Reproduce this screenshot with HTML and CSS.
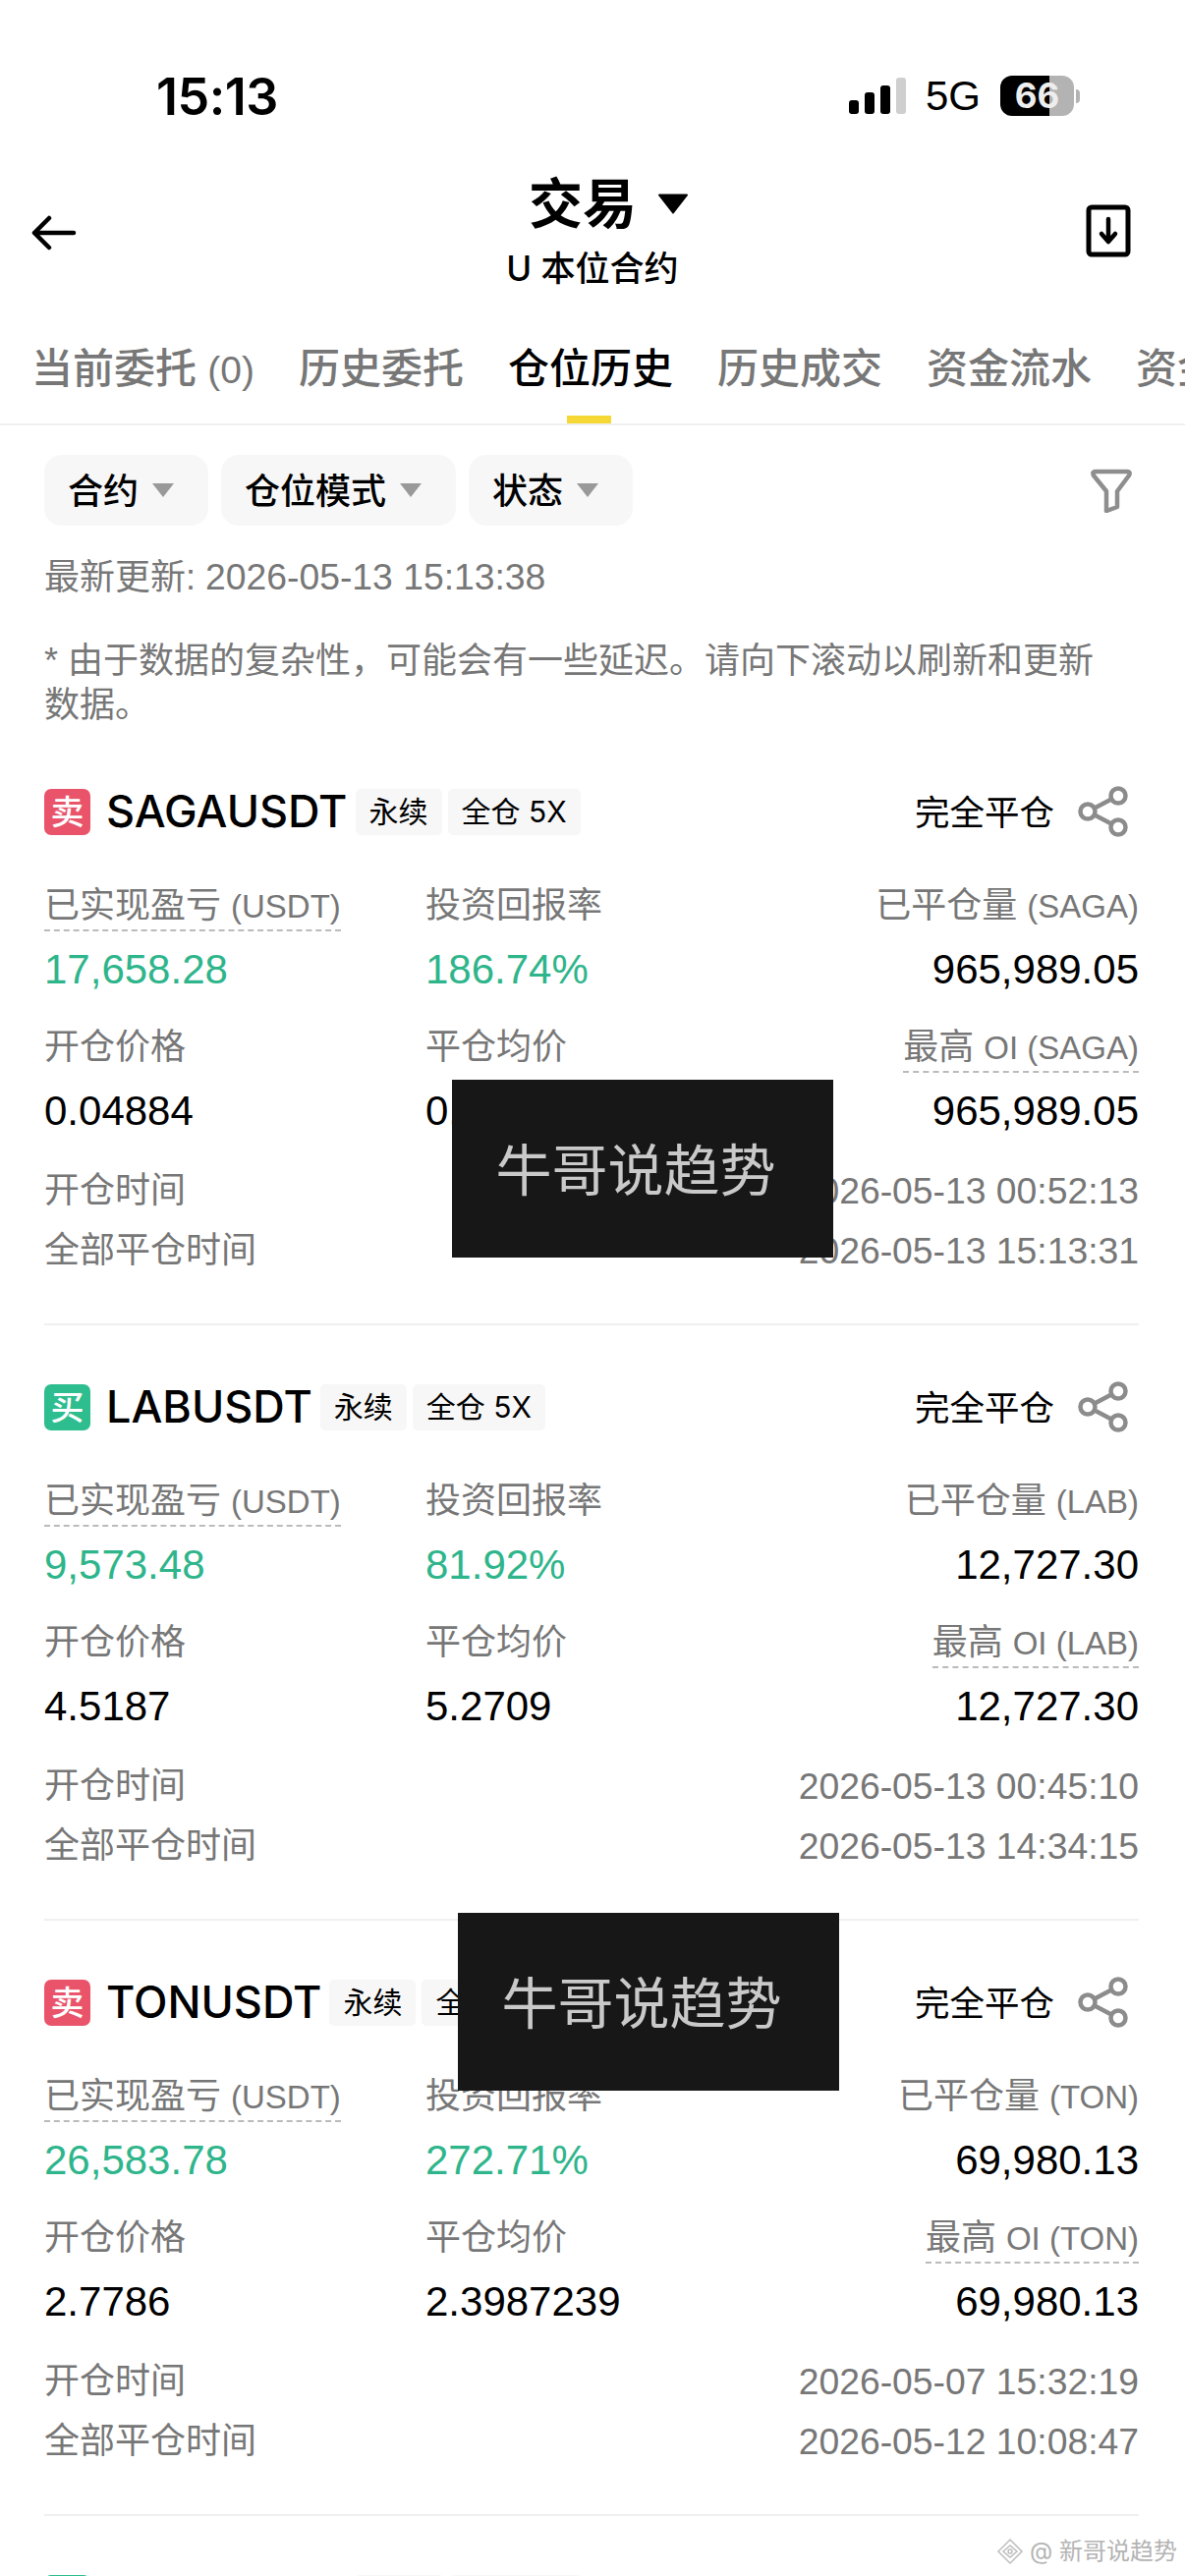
FILE: index.html
```html
<!DOCTYPE html>
<html lang="zh-CN">
<head>
    <meta charset="UTF-8">
    <meta name="viewport" content="width=device-width, initial-scale=1.0">
    <title>交易 - 仓位历史</title>
    <link rel="stylesheet" href="styles.css">
</head>
<body>
    <div class="page">
        <!-- Status bar -->
        <div class="status-bar">
            <span class="time">15:13</span>
            <div class="status-right">
                <div class="signal">
                    <i class="bar-1"></i><i class="bar-2"></i><i class="bar-3"></i><i class="bar-4"></i>
                </div>
                <span class="network">5G</span>
                <div class="battery"><span>66</span></div>
                <i class="battery-nub"></i>
            </div>
        </div>

        <!-- Title -->
        <div class="nav">
            <svg class="back" viewBox="0 0 46 36" fill="none" stroke="#000" stroke-width="4.500" stroke-linecap="round" stroke-linejoin="round">
                <path d="M43 18H3M18 3 3 18 18 33"/>
            </svg>
            <div class="nav-title">
                <div class="title-row">
                    <span class="title">交易</span>
                    <svg class="title-arrow" viewBox="0 0 30 22"><path d="M1 1.500h28a1 1 0 0 1 .8 1.600L15.800 21a1 1 0 0 1-1.600 0L.2 3.100A1 1 0 0 1 1 1.500z" fill="#000"/></svg>
                </div>
                <div class="subtitle">U 本位合约</div>
            </div>
            <svg class="download" viewBox="0 0 46 54" fill="none" stroke="#000" stroke-linecap="round" stroke-linejoin="round">
                <rect x="3" y="3" width="40" height="48" rx="3" stroke-width="5"/>
                <path d="M23 15v22M16 30l7 8 7-8" stroke-width="4.500"/>
            </svg>
        </div>

        <!-- Tabs -->
        <div class="tabs">
            <span class="tab">当前委托 <span class="tab-count">(0)</span></span>
            <span class="tab">历史委托</span>
            <span class="tab active">仓位历史</span>
            <span class="tab">历史成交</span>
            <span class="tab">资金流水</span>
            <span class="tab">资金费用</span>
        </div>

        <!-- Filters -->
        <div class="filters">
            <div class="chip"><span>合约</span><i class="caret"></i></div>
            <div class="chip"><span>仓位模式</span><i class="caret"></i></div>
            <div class="chip"><span>状态</span><i class="caret"></i></div>
            <svg class="filter-icon" viewBox="0 0 42 46" fill="none" stroke="#8e8e8e" stroke-width="4.500" stroke-linejoin="round">
                <path d="M5 4h32q4 0 2 4L27 24v16l-11 4V24L3 8q-2-4 2-4z"/>
            </svg>
        </div>

        <p class="updated">最新更新: <span class="stamp">2026-05-13 15:13:38</span></p>
        <p class="note">* 由于数据的复杂性，可能会有一些延迟。请向下滚动以刷新和更新数据。</p>

        <!-- SAGA -->
        <div class="card">
            <div class="card-head">
                <span class="side sell">卖</span>
                <span class="symbol">SAGAUSDT</span>
                <span class="tag">永续</span>
                <span class="tag">全仓 5X</span>
                <span class="state">完全平仓</span>
                <svg class="share" viewBox="0 0 52 52" fill="none" stroke="#8c8c8c" stroke-width="4.500"><circle cx="41" cy="10" r="7.500"/><circle cx="10" cy="26" r="7.500"/><circle cx="41" cy="42" r="7.500"/><path d="M17 22.500 34 13.500M17 29.500 34 38.500"/></svg>
            </div>
            <div class="stats">
                <div class="label"><span class="dotted">已实现盈亏 <span class="en">(USDT)</span></span></div>
                <div class="label">投资回报率</div>
                <div class="label right">已平仓量 <span class="en">(SAGA)</span></div>
                <div class="value up">17,658.28</div>
                <div class="value up">186.74%</div>
                <div class="value right">965,989.05</div>
                <div class="label">开仓价格</div>
                <div class="label">平仓均价</div>
                <div class="label right"><span class="dotted">最高 <span class="en">OI (SAGA)</span></span></div>
                <div class="value">0.04884</div>
                <div class="value">0.01707</div>
                <div class="value right">965,989.05</div>
            </div>
            <div class="times">
                <div class="time-row"><span>开仓时间</span><span class="stamp">2026-05-13 00:52:13</span></div>
                <div class="time-row"><span>全部平仓时间</span><span class="stamp">2026-05-13 15:13:31</span></div>
            </div>
        </div>

        <!-- LAB -->
        <div class="card">
            <div class="card-head">
                <span class="side buy">买</span>
                <span class="symbol">LABUSDT</span>
                <span class="tag">永续</span>
                <span class="tag">全仓 5X</span>
                <span class="state">完全平仓</span>
                <svg class="share" viewBox="0 0 52 52" fill="none" stroke="#8c8c8c" stroke-width="4.500"><circle cx="41" cy="10" r="7.500"/><circle cx="10" cy="26" r="7.500"/><circle cx="41" cy="42" r="7.500"/><path d="M17 22.500 34 13.500M17 29.500 34 38.500"/></svg>
            </div>
            <div class="stats">
                <div class="label"><span class="dotted">已实现盈亏 <span class="en">(USDT)</span></span></div>
                <div class="label">投资回报率</div>
                <div class="label right">已平仓量 <span class="en">(LAB)</span></div>
                <div class="value up">9,573.48</div>
                <div class="value up">81.92%</div>
                <div class="value right">12,727.30</div>
                <div class="label">开仓价格</div>
                <div class="label">平仓均价</div>
                <div class="label right"><span class="dotted">最高 <span class="en">OI (LAB)</span></span></div>
                <div class="value">4.5187</div>
                <div class="value">5.2709</div>
                <div class="value right">12,727.30</div>
            </div>
            <div class="times">
                <div class="time-row"><span>开仓时间</span><span class="stamp">2026-05-13 00:45:10</span></div>
                <div class="time-row"><span>全部平仓时间</span><span class="stamp">2026-05-13 14:34:15</span></div>
            </div>
        </div>

        <!-- TON -->
        <div class="card">
            <div class="card-head">
                <span class="side sell">卖</span>
                <span class="symbol">TONUSDT</span>
                <span class="tag">永续</span>
                <span class="tag">全仓 5X</span>
                <span class="state">完全平仓</span>
                <svg class="share" viewBox="0 0 52 52" fill="none" stroke="#8c8c8c" stroke-width="4.500"><circle cx="41" cy="10" r="7.500"/><circle cx="10" cy="26" r="7.500"/><circle cx="41" cy="42" r="7.500"/><path d="M17 22.500 34 13.500M17 29.500 34 38.500"/></svg>
            </div>
            <div class="stats">
                <div class="label"><span class="dotted">已实现盈亏 <span class="en">(USDT)</span></span></div>
                <div class="label">投资回报率</div>
                <div class="label right">已平仓量 <span class="en">(TON)</span></div>
                <div class="value up">26,583.78</div>
                <div class="value up">272.71%</div>
                <div class="value right">69,980.13</div>
                <div class="label">开仓价格</div>
                <div class="label">平仓均价</div>
                <div class="label right"><span class="dotted">最高 <span class="en">OI (TON)</span></span></div>
                <div class="value">2.7786</div>
                <div class="value">2.3987239</div>
                <div class="value right">69,980.13</div>
            </div>
            <div class="times">
                <div class="time-row"><span>开仓时间</span><span class="stamp">2026-05-07 15:32:19</span></div>
                <div class="time-row"><span>全部平仓时间</span><span class="stamp">2026-05-12 10:08:47</span></div>
            </div>
        </div>

        <!-- Next card, cut off by the bottom of the screen -->
        <div class="card">
            <div class="card-head">
                <span class="side buy"></span>
                <span class="symbol-blank"></span>
                <span class="tag tag-blank"></span>
                <span class="tag tag-blank wide"></span>
            </div>
        </div>

        <!-- Overlays -->
        <div class="mask mask-top">牛哥说趋势</div>
        <div class="mask mask-bottom">牛哥说趋势</div>
        <div class="credit">
            <svg viewBox="0 0 28 28" fill="none" stroke="#bdbdbd" stroke-width="1.500"><path d="M14 2 26 14 14 26 2 14z"/><path d="M7 14l7-6 7 6-7 6z"/><circle cx="14" cy="14" r="2"/></svg>
            <span>@ 新哥说趋势</span>
        </div>
    </div>
</body>
</html>
```

FILE: styles.css
```css
* {
    margin: 0;
    padding: 0;
    box-sizing: border-box;
}
html, body {
    width: 1206px;
    height: 2622px;
    overflow: hidden;
    background: #fff;
}
body {
    font-family: 'Inter', 'Noto Sans CJK SC', sans-serif;
    color: #000;
}
.page {
    position: relative;
    width: 1206px;
    height: 2622px;
    overflow: hidden;
}

/* status bar */
.status-bar {
    height: 118px;
    padding: 70px 107px 0 159px;
    display: flex;
    justify-content: space-between;
    align-items: flex-start;
}
.time {
    font-size: 52px;
    line-height: 58px;
    font-weight: 600;
    letter-spacing: -0.5px;
}
.status-right {
    display: flex;
    align-items: center;
    margin-top: 7px;
    height: 41px;
}
.signal {
    display: flex;
    align-items: flex-end;
    gap: 6px;
    height: 37px;
    margin-right: 20px;
}
.signal i {
    display: block;
    width: 10px;
    border-radius: 3px;
    background: #000;
}
.bar-1 { height: 14px; }
.bar-2 { height: 22px; }
.bar-3 { height: 29px; }
.signal .bar-4 { height: 37px; background: #cfcfcf; }
.network {
    font-size: 42px;
    line-height: 41px;
    font-weight: 500;
    font-family: 'Liberation Sans', sans-serif;
    margin-right: 20px;
}
.battery {
    width: 75px;
    height: 41px;
    border-radius: 12px;
    background: linear-gradient(90deg, #000 67%, #b3b3b3 67%);
    color: #eee;
    font-size: 35px;
    font-weight: 700;
    line-height: 41px;
    text-align: center;
}
.battery-nub {
    width: 4px;
    height: 14px;
    margin-left: 2px;
    border-radius: 0 4px 4px 0;
    background: #b3b3b3;
}

/* title */
.nav {
    position: relative;
    height: 179px;
    display: flex;
    justify-content: center;
}
.nav-title {
    display: flex;
    flex-direction: column;
    align-items: center;
    padding-top: 58px;
}
.title-row {
    display: flex;
    align-items: center;
    height: 62px;
    gap: 22px;
    margin-left: 32px;
}
.title {
    font-size: 55px;
    line-height: 62px;
    font-weight: 700;
}
.title-arrow {
    width: 30px;
    height: 22px;
}
.subtitle {
    font-size: 35px;
    line-height: 44px;
    margin-top: 13px;
    font-weight: 500;
}
.back {
    position: absolute;
    left: 32px;
    top: 101px;
    width: 46px;
    height: 36px;
}
.download {
    position: absolute;
    left: 1105px;
    top: 90px;
    width: 46px;
    height: 54px;
}

/* tabs */
.tabs {
    height: 136px;
    padding: 52px 0 0 32px;
    display: flex;
    gap: 45px;
    border-bottom: 2px solid #f0f0f0;
    overflow: hidden;
    white-space: nowrap;
}
.tab {
    position: relative;
    height: 83px;
    flex: none;
    font-size: 42px;
    line-height: 52px;
    color: #777;
    font-weight: 500;
}
.tab-count {
    font-size: 39px;
    font-family: 'Liberation Sans', sans-serif;
}
.tab.active {
    color: #000;
}
.tab.active::after {
    content: "";
    position: absolute;
    left: 60px;
    bottom: 0;
    width: 45px;
    height: 9px;
    background: #f5d735;
}

/* filters */
.filters {
    display: flex;
    align-items: center;
    gap: 13px;
    padding: 30px 47px 0 45px;
    height: 102px;
}
.chip {
    height: 72px;
    padding: 0 35px 0 24px;
    display: flex;
    align-items: center;
    gap: 14px;
    font-size: 36px;
    font-weight: 500;
    background: #f7f7f7;
    border-radius: 18px;
}
.chip span {
    margin-bottom: 4px;
}
.caret {
    width: 0;
    height: 0;
    border-left: 11px solid transparent;
    border-right: 11px solid transparent;
    border-top: 14px solid #999;
}
.filter-icon {
    width: 42px;
    height: 46px;
    margin: 0 7px 0 auto;
}
.updated, .note, .label, .time-row, .value {
    font-family: 'Liberation Sans', 'Noto Sans CJK SC', sans-serif;
}
.updated, .note {
    padding: 0 47px 0 45px;
    font-size: 36px;
    line-height: 45px;
    color: #777;
}
.updated {
    margin-top: 30px;
}
.note {
    margin-top: 40px;
    padding-right: 76px;
}
.stamp {
    font-size: 37.300px;
}

/* position cards */
.card {
    margin: 62px 47px 0 45px;
    height: 547px;
    border-bottom: 2px solid #f0f0f0;
}
.card + .card {
    margin-top: 59px;
}
.card-head {
    display: flex;
    align-items: center;
    height: 48px;
}
.side {
    width: 47px;
    height: 47px;
    margin-right: 16px;
    border-radius: 7px;
    color: #fff;
    font-size: 34px;
    line-height: 47px;
    font-weight: 500;
    text-align: center;
}
.sell { background: #e9546b; }
.buy { background: #2ebd8e; }
.symbol {
    font-size: 45px;
    line-height: 48px;
    font-weight: 500;
    margin-right: 8px;
}
.symbol-blank {
    width: 253px;
}
.tag {
    height: 47px;
    padding: 0 14px;
    margin-right: 6px;
    font-size: 30px;
    line-height: 47px;
    background: #f7f7f7;
    border-radius: 5px;
}
.tag-blank {
    width: 91px;
}
.tag-blank.wide {
    width: 134px;
}
.state {
    margin: 0 0 3px auto;
    font-size: 35.500px;
}
.share {
    width: 52px;
    height: 52px;
    margin: 0 10px 0 24px;
}
.stats {
    display: grid;
    grid-template-columns: 388px 1fr auto;
    grid-auto-rows: 65px;
    margin-top: 49px;
}
.stats > :nth-child(n+7) {
    margin-top: 14px;
}
.label {
    font-size: 36px;
    line-height: 46px;
    color: #777;
}
.en {
    font-size: 33px;
}
.dotted {
    display: inline-block;
    border-bottom: 2px dashed #bbb;
}
.value {
    font-size: 42px;
    line-height: 46px;
}
.value.up {
    color: #2fb58b;
}
.right {
    text-align: right;
}
.times {
    margin-top: 30px;
}
.time-row {
    display: flex;
    justify-content: space-between;
    height: 61px;
    font-size: 36px;
    line-height: 46px;
    color: #777;
}

/* overlays */
.mask {
    position: absolute;
    width: 388px;
    height: 181px;
    padding: 0 14px 6px 0;
    display: flex;
    align-items: center;
    justify-content: center;
    background: #171717;
    color: #c9c9c9;
    font-size: 57px;
}
.mask-top {
    left: 460px;
    top: 1099px;
}
.mask-bottom {
    left: 466px;
    top: 1947px;
}
.credit {
    position: absolute;
    right: 8px;
    top: 2583px;
    display: flex;
    align-items: center;
    gap: 6px;
    color: #b4b4b4;
    font-size: 24px;
    line-height: 28px;
}
.credit svg {
    width: 28px;
    height: 28px;
}
```
